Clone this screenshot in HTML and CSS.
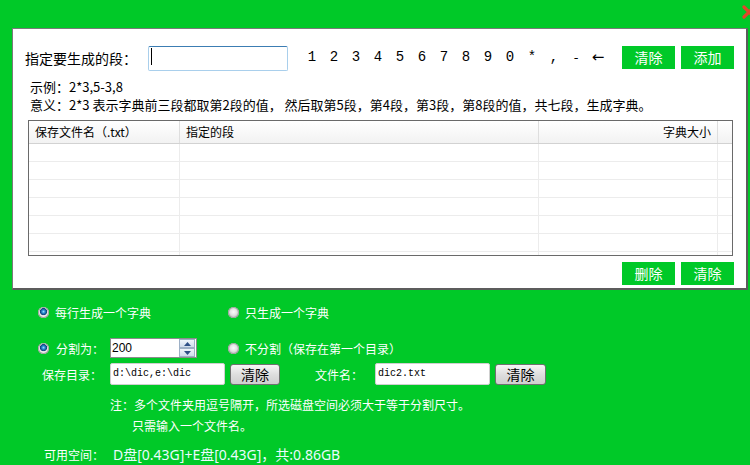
FILE: index.html
```html
<!DOCTYPE html>
<html lang="zh-CN">
<head>
<meta charset="utf-8">
<title>字典生成</title>
<link rel="stylesheet" href="styles.css">
</head>
<body>
<div class="titlebar">
  <svg class="close" viewBox="0 0 14 14" width="14" height="14"><path d="M2 2 L12 12 M12 2 L2 12" stroke="#e2462a" stroke-width="3.2" stroke-linecap="round"/></svg>
</div>
<div class="panel">
  <div class="top-row">
    <span class="seg-label">指定要生成的段：</span>
    <div class="seg-input"><span class="caret"></span></div>
    <div class="keypad">
      <span>1</span><span>2</span><span>3</span><span>4</span><span>5</span><span>6</span><span>7</span><span>8</span><span>9</span><span>0</span><span>*</span><span>,</span><span class="dash">-</span><span class="arrow">←</span>
    </div>
    <button class="gbtn first">清除</button>
    <button class="gbtn">添加</button>
  </div>
  <div class="hint first">示例：2*3,5-3,8</div>
  <div class="hint">意义：2*3 表示字典前三段都取第2段的值， 然后取第5段，第4段，第3段，第8段的值，共七段，生成字典。</div>
  <div class="grid">
    <div class="grid-row grid-head">
      <div class="c1">保存文件名（.txt）</div><div class="c2">指定的段</div><div class="c3">字典大小</div><div></div>
    </div>
    <div class="grid-row"><div></div><div></div><div></div><div></div></div>
    <div class="grid-row"><div></div><div></div><div></div><div></div></div>
    <div class="grid-row"><div></div><div></div><div></div><div></div></div>
    <div class="grid-row"><div></div><div></div><div></div><div></div></div>
    <div class="grid-row"><div></div><div></div><div></div><div></div></div>
    <div class="grid-row"><div></div><div></div><div></div><div></div></div>
    <div class="grid-row"><div></div><div></div><div></div><div></div></div>
  </div>
  <div class="bottom-btns">
    <button class="gbtn">删除</button>
    <button class="gbtn">清除</button>
  </div>
</div>

<div class="opt-row row1">
  <label class="radio-item wide"><span class="radio on"></span>每行生成一个字典</label>
  <label class="radio-item"><span class="radio"></span>只生成一个字典</label>
</div>

<div class="opt-row row2">
  <label class="radio-item split"><span class="radio on"></span>分割为：</label>
  <div class="spinner">
    <span class="spin-val">200</span>
    <div class="spin-btns">
      <span class="spin-btn"><svg viewBox="0 0 7 4" width="7" height="4"><path d="M0 4 L3.5 0 L7 4 Z" fill="#2d4f86"/></svg></span>
      <span class="spin-btn"><svg viewBox="0 0 7 4" width="7" height="4"><path d="M0 0 L3.5 4 L7 0 Z" fill="#2d4f86"/></svg></span>
    </div>
  </div>
  <label class="radio-item nosplit"><span class="radio"></span>不分割（保存在第一个目录）</label>
</div>

<div class="opt-row row3">
  <span class="field-label dir">保存目录：</span>
  <div class="text-field">d:\dic,e:\dic</div>
  <button class="gray-btn">清除</button>
  <span class="field-label fname">文件名：</span>
  <div class="text-field">dic2.txt</div>
  <button class="gray-btn wide">清除</button>
</div>

<div class="note">
  <div>注：多个文件夹用逗号隔开，所选磁盘空间必须大于等于分割尺寸。</div>
  <div class="indent">只需输入一个文件名。</div>
</div>

<div class="avail">
  <span class="avail-label">可用空间：</span>
  <span class="avail-val">D盘[0.43G]+E盘[0.43G]，共:0.86GB</span>
</div>
</body>
</html>
```

FILE: styles.css
```css
html, body {
  margin: 0;
  padding: 0;
}

body {
  width: 750px;
  height: 465px;
  overflow: hidden;
  background: #00c928;
  font-family: "Noto Sans CJK SC", "Noto Sans", sans-serif;
  color: #000;
}

.titlebar {
  height: 28px;
  display: flex;
  justify-content: flex-end;
  align-items: flex-start;
}

.close {
  margin-top: 5px;
  margin-right: -6px;
  flex: none;
}

.panel {
  margin-left: 12px;
  width: 736px;
  height: 262px;
  box-sizing: border-box;
  background: #fff;
  border: 1px solid #7a7a7a;
  border-right: 2px solid #5c5c5c;
  border-bottom: 2px solid #5c5c5c;
  padding: 17px 12px 0 0;
}

.top-row {
  display: flex;
  align-items: flex-start;
  height: 25px;
}

.seg-label {
  margin-left: 12px;
  width: 123px;
  font-size: 14px;
  line-height: 25px;
  white-space: nowrap;
}

.seg-input {
  width: 140px;
  height: 25px;
  box-sizing: border-box;
  border: 1px solid #a9cfec;
  border-top-color: #3c7db3;
  border-radius: 2px;
  padding: 1px 2px;
}

.caret {
  display: block;
  width: 1px;
  height: 17px;
  background: #000;
}

.keypad {
  display: flex;
  margin-left: 13px;
  font-family: "Liberation Mono", "DejaVu Sans Mono", monospace;
  font-size: 14px;
  line-height: 23px;
}

.keypad span {
  width: 22px;
  text-align: center;
}

.keypad .dash {
  font-family: "DejaVu Sans", sans-serif;
  font-size: 13px;
}

.keypad .arrow {
  font-family: "DejaVu Sans", sans-serif;
  font-size: 15px;
}

.gbtn {
  width: 53px;
  height: 23px;
  margin: 0 0 0 6px;
  padding: 0;
  border: none;
  background: #00c928;
  color: #fff;
  font-family: "Noto Sans CJK SC", sans-serif;
  font-size: 14px;
  line-height: 23px;
}

.gbtn.first {
  margin-left: 13px;
}

.hint {
  margin-left: 17px;
  font-size: 13px;
  line-height: 18px;
  white-space: nowrap;
}

.hint.first {
  margin-top: 7px;
}

.grid {
  margin: 6px 0 0 15px;
  width: 705px;
  height: 136px;
  box-sizing: border-box;
  border: 1px solid #6a6a6a;
  overflow: hidden;
}

.grid-row {
  display: grid;
  grid-template-columns: 151px 359px 179px 1fr;
  height: 18px;
  box-sizing: border-box;
  border-bottom: 1px solid #ececec;
}

.grid-row > div {
  border-right: 1px solid #ececec;
}

.grid-row > div:last-child {
  border-right: none;
}

.grid-head {
  height: 23px;
  background: linear-gradient(#ffffff, #f2f2f2);
  border-bottom: 1px solid #d2d2d2;
  font-size: 12px;
  line-height: 22px;
  white-space: nowrap;
}

.grid-head > div {
  border-right: 1px solid #dedede;
}

.grid-head .c1 {
  padding-left: 6px;
}

.grid-head .c2 {
  padding-left: 6px;
}

.grid-head .c3 {
  text-align: right;
  padding-right: 6px;
}

.bottom-btns {
  display: flex;
  justify-content: flex-end;
  margin-top: 6px;
}

.opt-row {
  display: flex;
  align-items: center;
  color: #fff;
  font-size: 12px;
  white-space: nowrap;
}

.row1 {
  margin: 14px 0 0 38px;
  height: 16px;
}

.radio-item {
  display: flex;
  align-items: center;
  gap: 6px;
}

.radio-item.wide {
  width: 190px;
}

.radio {
  width: 11px;
  height: 11px;
  border-radius: 50%;
  flex: none;
  background: radial-gradient(circle at 50% 45%, #fbfbfb 0, #e6e6e6 3px, #c4c4c4 5.5px);
  box-shadow: inset 0 0 0 1px #a3a3a3;
}

.radio.on {
  background: radial-gradient(circle at 50% 42%, #9fe0ff 0, #2a8fd4 1.5px, #0b3f7a 3.3px, #dcdcdc 3.8px, #f6f6f6 4.6px, #c9c9c9 5.5px);
}

.row2 {
  margin: 18px 0 0 38px;
  height: 20px;
}

.radio-item.split {
  width: 72px;
  gap: 7px;
}

.spinner {
  display: flex;
  width: 87px;
  height: 20px;
  box-sizing: border-box;
  border: 1px solid #8c8c8c;
  background: #fff;
}

.spin-val {
  flex: 1;
  color: #000;
  font-family: "Liberation Sans", sans-serif;
  font-size: 12px;
  line-height: 18px;
  padding-left: 1px;
}

.spin-btns {
  display: flex;
  flex-direction: column;
  width: 16px;
  margin: 0 1px 0 0;
}

.spin-btn {
  flex: 1;
  display: flex;
  align-items: center;
  justify-content: center;
  box-sizing: border-box;
  border: 1px solid #9db0c6;
  background: linear-gradient(#f0f5fb, #cfdceb);
}

.radio-item.nosplit {
  margin-left: 31px;
}

.row3 {
  margin: 5px 0 0 42px;
  height: 22px;
}

.field-label {
  display: block;
}

.field-label.dir {
  width: 68px;
}

.field-label.fname {
  margin-left: 35px;
  width: 60px;
}

.text-field {
  width: 115px;
  height: 22px;
  box-sizing: border-box;
  border: 1px solid #cfcfcf;
  border-radius: 2px;
  background: #fff;
  color: #000;
  padding-left: 2px;
  font-family: "Liberation Mono", "DejaVu Sans Mono", monospace;
  font-size: 10px;
  line-height: 20px;
}

.gray-btn {
  width: 50px;
  height: 21px;
  margin: 0 0 0 5px;
  padding: 0;
  border: 1px solid #707070;
  border-radius: 3px;
  background: linear-gradient(#f6f6f6, #dedede 50%, #cfcfcf);
  color: #000;
  font-family: "Noto Sans CJK SC", sans-serif;
  font-size: 14px;
  line-height: 19px;
}

.gray-btn.wide {
  width: 51px;
}

.note {
  margin: 9px 0 0 110px;
  color: #fff;
  font-size: 12px;
  line-height: 21px;
  white-space: nowrap;
}

.note .indent {
  padding-left: 22px;
}

.avail {
  display: flex;
  align-items: center;
  margin: 10px 0 0 44px;
  height: 18px;
  white-space: nowrap;
}

.avail-label {
  width: 69px;
  color: #fff;
  font-size: 12px;
  line-height: 16px;
}

.avail-val {
  color: #eafcff;
  font-family: "Noto Sans", "Noto Sans CJK SC", sans-serif;
  font-size: 14px;
  line-height: 16px;
}
```
